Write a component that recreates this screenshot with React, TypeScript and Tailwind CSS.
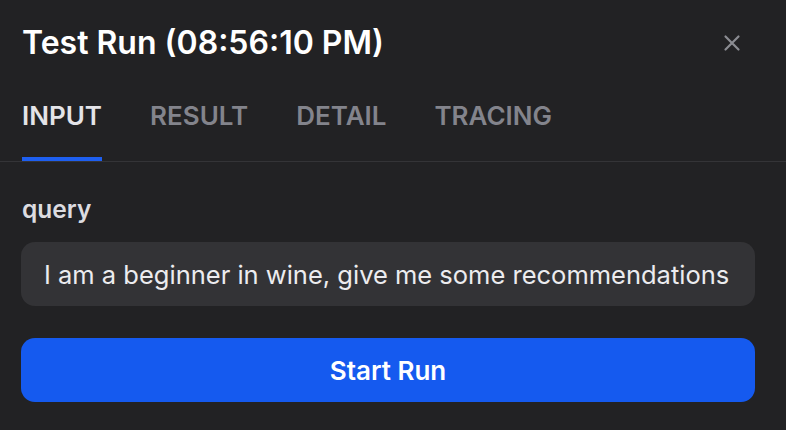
import { useState } from 'react';

const tabs = ['INPUT', 'RESULT', 'DETAIL', 'TRACING'];

export default function App() {
  const [active, setActive] = useState('INPUT');
  const [query, setQuery] = useState('I am a beginner in wine, give me some recommendations');

  return (
    <div className="w-[786px] h-[430px] bg-[#222224] text-white font-['Inter',sans-serif] overflow-hidden">
      <div className="flex items-center justify-between pl-[22px] pr-[44px] pt-[24px]">
        <h1 className="text-[32px] leading-[38px] font-semibold text-white">Test Run (08:56:10 PM)</h1>
        <button className="text-[#8b8c92]">
          <svg width="20" height="20" viewBox="0 0 20 20" fill="none" stroke="currentColor" strokeWidth="2.2" strokeLinecap="round">
            <path d="M3.5 3.5l13 13M16.5 3.5l-13 13" />
          </svg>
        </button>
      </div>

      <div className="flex gap-[48px] pl-[22px] mt-[39px] border-b border-[#343437]">
        {tabs.map((t) => (
          <button
            key={t}
            onClick={() => setActive(t)}
            className={`relative pb-[30px] text-[26px] leading-[30px] font-semibold ${
              active === t ? 'text-[#e4e4e8]' : 'text-[#83848c]'
            }`}
          >
            {t}
            {active === t && <span className="absolute left-0 right-0 bottom-0 h-[4px] bg-[#1e5ff0]" />}
          </button>
        ))}
      </div>

      <div className="pl-[21px] pr-[31px] pt-[33px]">
        <label className="block text-[24.5px] leading-[28px] font-semibold text-[#dcdce0] pl-[1px]">query</label>
        <input
          value={query}
          onChange={(e) => setQuery(e.target.value)}
          className="mt-[19px] w-full h-[64px] rounded-[14px] bg-[#333336] px-[23px] text-[25.5px] text-[#ececef] outline-none"
        />
        <button className="mt-[32px] w-full h-[64px] rounded-[14px] bg-[#155aef] text-[26px] font-semibold text-white">
          Start Run
        </button>
      </div>
    </div>
  );
}
